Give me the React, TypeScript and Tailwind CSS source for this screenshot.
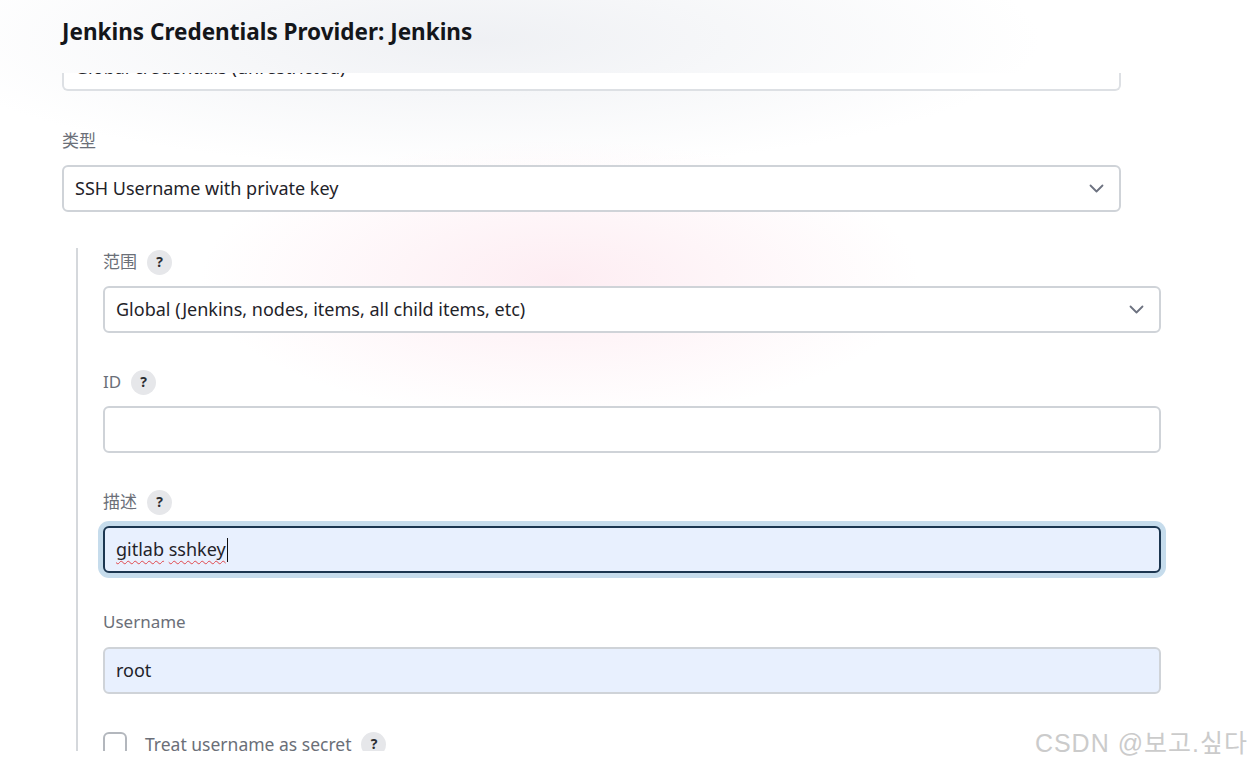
import React from "react";

const FONT = "font-['Noto_Sans','Noto_Sans_CJK_SC',sans-serif]";

function Help() {
  return (
    <span className="ml-[10px] inline-flex h-[25px] w-[25px] items-center justify-center rounded-full bg-[#e6e7ea] text-[14px] font-bold leading-none text-[#2b2d31]">
      ?
    </span>
  );
}

function Chevron() {
  return (
    <svg width="15" height="9" viewBox="0 0 15 9" fill="none" className="text-[#6d7280]">
      <polyline
        points="1.5,1.5 7.5,7.5 13.5,1.5"
        stroke="currentColor"
        strokeWidth="1.8"
        strokeLinecap="round"
        strokeLinejoin="round"
      />
    </svg>
  );
}

function Label({ text, help }: { text: string; help?: boolean }) {
  return (
    <div className="flex h-6 items-center text-[17px] text-[#6b6f78]">
      <span>{text}</span>
      {help && <Help />}
    </div>
  );
}

function Select({ value, width }: { value: string; width: string }) {
  return (
    <div
      className={`flex h-[47px] ${width} items-center justify-between rounded-[6px] border-2 border-[#cfd3d8] bg-white pl-[11px] pr-[15px] text-[18px] text-[#1f2329]`}
    >
      <span>{value}</span>
      <Chevron />
    </div>
  );
}

export default function App() {
  return (
    <div
      className={`relative h-[762px] w-[1252px] overflow-hidden bg-white ${FONT}`}
    >
      <div className="pointer-events-none absolute inset-0 bg-[radial-gradient(ellipse_360px_140px_at_560px_280px,rgba(252,222,232,0.55),rgba(255,255,255,0)),radial-gradient(ellipse_560px_130px_at_480px_40px,rgba(236,238,242,0.85),rgba(255,255,255,0))]" />
      <div className="relative h-[751px] overflow-hidden">
        {/* header */}
        <div className="h-[73px] pl-[62px] pt-[16px]">
          <h1 className="text-[22.5px] font-bold leading-8 text-[#14161a]">
            Jenkins Credentials Provider: Jenkins
          </h1>
        </div>

        {/* clipped select */}
        <div className="ml-[62px] h-[18px] w-[1059px] overflow-hidden rounded-b-[6px] border-2 border-t-0 border-[#dde0e4] bg-white">
          <div className="-mt-[18px] pl-[11px] text-[18px] leading-6 text-[#1f2329]">
            Global credentials (unrestricted)
          </div>
        </div>

        <div className="ml-[62px] mt-[38px]">
          <div className="flex h-6 items-center text-[17px] text-[#6b6f78]">类型</div>
          <div className="mt-[12px]">
            <Select value="SSH Username with private key" width="w-[1059px]" />
          </div>
        </div>

        {/* nested */}
        <div className="ml-[76px] mt-[36px] border-l-2 border-[#d5d8dc] pl-[25px] pt-[2px]">
          <Label text="范围" help />
          <div className="mt-[12px]">
            <Select
              value="Global (Jenkins, nodes, items, all child items, etc)"
              width="w-[1058px]"
            />
          </div>

          <div className="mt-[37px]">
            <Label text="ID" help />
          </div>
          <div className="mt-[12px] h-[47px] w-[1058px] rounded-[6px] border-2 border-[#cfd3d8] bg-white" />

          <div className="mt-[37px]">
            <Label text="描述" help />
          </div>
          <div className="mt-[12px] flex h-[47px] w-[1058px] items-center rounded-[6px] border-2 border-[#1c3650] bg-[#e8f0fe] pl-[11px] text-[18px] text-[#1f2329] shadow-[0_0_0_5px_#c6dcec]">
            <span className="underline decoration-wavy decoration-[#e0474c] decoration-1 underline-offset-[4px]">
              gitlab
            </span>
            <span>&nbsp;</span>
            <span className="underline decoration-wavy decoration-[#e0474c] decoration-1 underline-offset-[4px]">
              sshkey
            </span>
            <span className="ml-px inline-block h-[24px] w-px bg-[#111]" />
          </div>

          <div className="mt-[37px]">
            <Label text="Username" />
          </div>
          <div className="mt-[13px] flex h-[47px] w-[1058px] items-center rounded-[6px] border-2 border-[#cfd3d8] bg-[#e8f0fe] pl-[11px] text-[18px] text-[#1f2329]">
            root
          </div>

          <div className="mt-[37px] flex items-center">
            <span className="inline-block h-[24px] w-[24px] rounded-[6px] border-2 border-[#b3b7bd] bg-white" />
            <span className="ml-[18px] text-[17.5px] text-[#6b6f78]">
              Treat username as secret
            </span>
            <Help />
          </div>
          <div className="h-[40px]" />
        </div>
      </div>

      <div className="absolute right-[4px] top-[725px] font-['Liberation_Sans','Noto_Sans_CJK_KR',sans-serif] text-[25px] tracking-[1px] text-[#cbcbcb] [text-shadow:0_0_1px_#ffffff,1px_1px_0_#ffffff]">
        CSDN @보고.싶다
      </div>
    </div>
  );
}
